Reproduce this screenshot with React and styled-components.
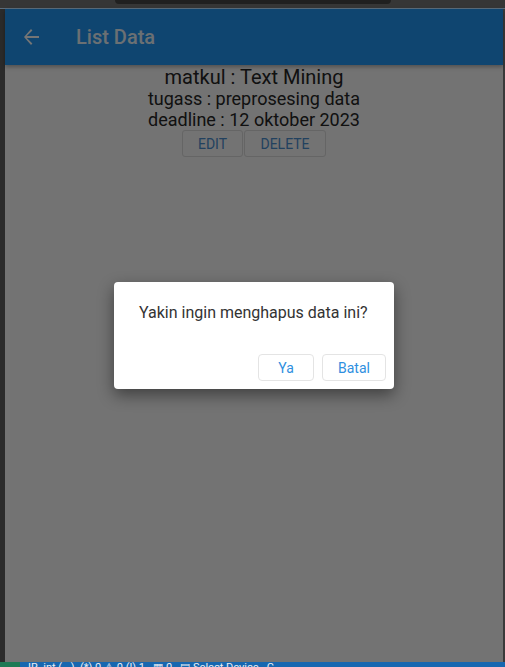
import React from "react";
import styled, { createGlobalStyle } from "styled-components";

const data = {
  matkul: "Text Mining",
  tugas: "preprosesing data",
  deadline: "12 oktober 2023",
};

export default function App() {
  return (
    <>
      <GlobalStyle />
      <Screen>
        <TopBar>
          <Notch />
        </TopBar>
        <Middle>
          <Rail />
          <Phone>
            <Header>
              <BackButton aria-label="back">
                <svg width="16" height="16" viewBox="0 0 16 16">
                  <path
                    d="M15 7H2.8l5.6-5.6L7 0 0 8l7 8 1.4-1.4L2.8 9H15z"
                    fill="currentColor"
                  />
                </svg>
              </BackButton>
              <Title>List Data</Title>
            </Header>
            <Content>
              <Line size={20}>matkul : {data.matkul}</Line>
              <Line size={18}>tugass : {data.tugas}</Line>
              <Line size={18}>deadline : {data.deadline}</Line>
              <Actions>
                <OutlineButton width={61}>Edit</OutlineButton>
                <OutlineButton width={82}>Delete</OutlineButton>
              </Actions>
            </Content>
            <Overlay>
              <Dialog>
                <Message>Yakin ingin menghapus data ini?</Message>
                <DialogActions>
                  <DialogButton width={56}>Ya</DialogButton>
                  <DialogButton width={64}>Batal</DialogButton>
                </DialogActions>
              </Dialog>
            </Overlay>
          </Phone>
          <Rail right />
        </Middle>
        <StatusBar>
          <StatusTag />
          <StatusText>IR  int (...)  (*) 0 ⚠ 0 (!) 1   ▦ 0   ▤ Select Device   C</StatusText>
        </StatusBar>
      </Screen>
    </>
  );
}

const GlobalStyle = createGlobalStyle`
  body {
    margin: 0;
    background-color: #2b2b2b;
    font-family: Roboto, "Liberation Sans", sans-serif;
  }
`;

const Screen = styled.div`
  display: flex;
  flex-direction: column;
  width: 505px;
  height: 667px;
  overflow: hidden;
`;

const TopBar = styled.div`
  display: flex;
  justify-content: flex-start;
  height: 8px;
  background-color: #363636;
  border-bottom: 1px solid #5b6d7d;
`;

const Notch = styled.div`
  width: 276px;
  height: 4px;
  margin-left: 115px;
  border-radius: 0 0 8px 8px;
  background-color: #202020;
`;

const Middle = styled.div`
  display: flex;
  flex: 1;
  min-height: 0;
`;

const Rail = styled.div`
  width: ${(props) => (props.right ? "2px" : "5px")};
  background-color: ${(props) => (props.right ? "#3a3a3a" : "#2b2b2b")};
`;

const Phone = styled.div`
  position: relative;
  display: flex;
  flex-direction: column;
  flex: 1;
  background-color: #fafafa;
`;

const Header = styled.div`
  display: flex;
  align-items: center;
  height: 56px;
  padding: 0 19px;
  color: #ffffff;
  background-color: #2197f4;
  box-shadow: 0 2px 4px rgba(0, 0, 0, 0.3);
  z-index: 1;
`;

const BackButton = styled.div`
  display: flex;
  align-items: center;
  width: 52px;
  height: 16px;
`;

const Title = styled.div`
  font-size: 20px;
  font-weight: 500;
  color: #eaf3fb;
`;

const Content = styled.div`
  display: flex;
  flex-direction: column;
  align-items: center;
  padding-top: 2px;
`;

const Line = styled.div`
  font-size: ${(props) => props.size}px;
  line-height: 21px;
  color: #262626;
`;

const Actions = styled.div`
  display: flex;
  gap: 1px;
`;

const OutlineButton = styled.div`
  display: flex;
  justify-content: center;
  align-items: center;
  box-sizing: border-box;
  width: ${(props) => props.width}px;
  height: 27px;
  border: 1px solid #dcdcdc;
  border-radius: 3px;
  font-size: 14px;
  text-transform: uppercase;
  color: #4a8fd0;
`;

const Overlay = styled.div`
  position: absolute;
  inset: 0;
  display: flex;
  justify-content: center;
  align-items: flex-start;
  padding-top: 273px;
  background-color: rgba(0, 0, 0, 0.54);
  z-index: 2;
`;

const Dialog = styled.div`
  display: flex;
  flex-direction: column;
  box-sizing: border-box;
  width: 280px;
  height: 107px;
  border-radius: 4px;
  background-color: #ffffff;
  box-shadow: 0 6px 16px rgba(0, 0, 0, 0.45);
`;

const Message = styled.div`
  flex: 1;
  padding: 21px 24px 0 25px;
  font-size: 16px;
  color: #333333;
`;

const DialogActions = styled.div`
  display: flex;
  justify-content: flex-end;
  gap: 8px;
  padding: 0 8px 8px;
`;

const DialogButton = styled.div`
  display: flex;
  justify-content: center;
  align-items: center;
  box-sizing: border-box;
  width: ${(props) => props.width}px;
  height: 27px;
  border: 1px solid #e4e4e4;
  border-radius: 4px;
  font-size: 14px;
  color: #2f8fe0;
`;

const StatusBar = styled.div`
  display: flex;
  align-items: flex-start;
  height: 5px;
  overflow: hidden;
  background-color: #1767b0;
`;

const StatusTag = styled.div`
  width: 20px;
  height: 100%;
  background-color: #1e7a55;
`;

const StatusText = styled.div`
  margin-left: 8px;
  font-size: 11px;
  line-height: 12px;
  white-space: pre;
  color: #e8eef4;
`;
